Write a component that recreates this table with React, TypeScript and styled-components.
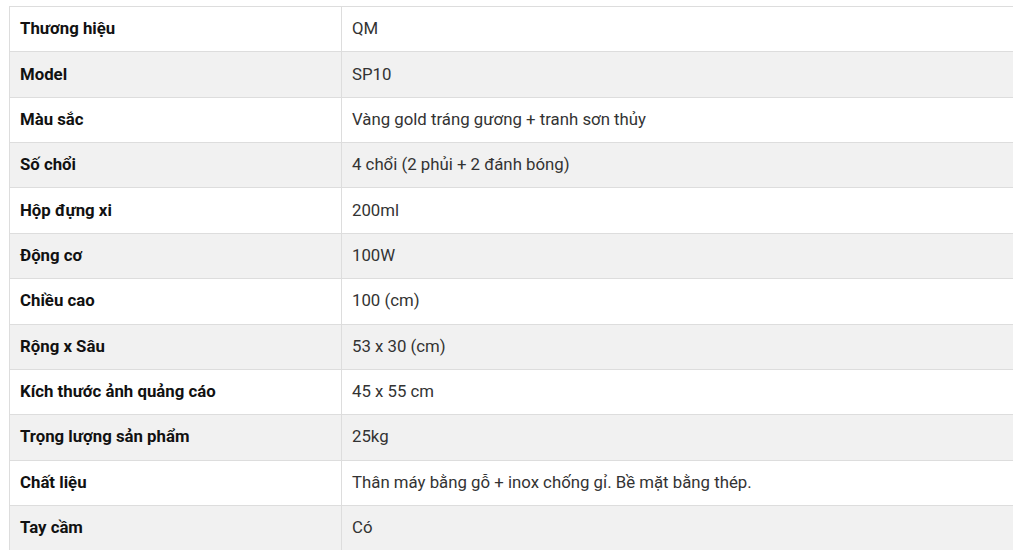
import styled, { createGlobalStyle } from 'styled-components'

const GlobalStyle = createGlobalStyle`
    html, body {
        margin: 0;
        padding: 0;
        background: #ffffff;
        overflow: hidden;
    }
    body {
        font-family: Roboto, "Noto Sans", Arial, sans-serif;
    }
`

const Page = styled.div`
    padding: 6px 0 0 9px;
    width: 1040px;
`

const SpecTable = styled.table`
    width: 1030px;
    border-collapse: collapse;
    font-size: 16.8px;
    color: #333333;
`

const Row = styled.tr<{ $shaded: boolean }>`
    background: ${(props) => (props.$shaded ? '#f1f1f1' : '#ffffff')};
`

const Label = styled.td`
    width: 332px;
    height: 45.36px;
    box-sizing: border-box;
    padding: 0 0 2px 10px;
    border: 1px solid #dddddd;
    font-weight: 700;
    color: #111111;
    vertical-align: middle;
`

const Value = styled.td`
    height: 45.36px;
    box-sizing: border-box;
    padding: 0 10px 2px;
    border: 1px solid #dddddd;
    color: #333333;
    vertical-align: middle;
`

const specs: Array<[string, string]> = [
    ['Thương hiệu', 'QM'],
    ['Model', 'SP10'],
    ['Màu sắc', 'Vàng gold tráng gương + tranh sơn thủy'],
    ['Số chổi', '4 chổi (2 phủi + 2 đánh bóng)'],
    ['Hộp đựng xi', '200ml'],
    ['Động cơ', '100W'],
    ['Chiều cao', '100 (cm)'],
    ['Rộng x Sâu', '53 x 30 (cm)'],
    ['Kích thước ảnh quảng cáo', '45 x 55 cm'],
    ['Trọng lượng sản phẩm', '25kg'],
    ['Chất liệu', 'Thân máy bằng gỗ + inox chống gỉ. Bề mặt bằng thép.'],
    ['Tay cầm', 'Có'],
]

const App = (): JSX.Element => {
    return (
        <>
            <GlobalStyle />
            <Page>
                <SpecTable>
                    <tbody>
                        {specs.map(([label, value], i) => (
                            <Row key={label} $shaded={i % 2 === 1}>
                                <Label>{label}</Label>
                                <Value>{value}</Value>
                            </Row>
                        ))}
                    </tbody>
                </SpecTable>
            </Page>
        </>
    )
}

export default App
